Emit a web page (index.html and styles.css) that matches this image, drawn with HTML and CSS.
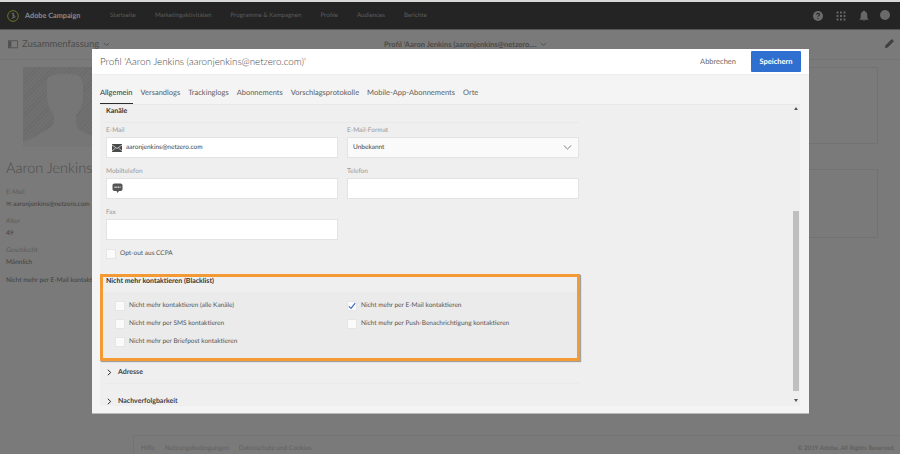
FILE: index.html
```html
<!DOCTYPE html>
<html lang="de">
<head>
<meta charset="utf-8">
<title>Adobe Campaign</title>
<link rel="stylesheet" href="styles.css">
</head>
<body>
<div class="page">
  <header class="topbar">
    <div class="brand">
      <svg class="logo" viewBox="0 0 18 18"><circle cx="9" cy="9" r="8" fill="none" stroke="#7d8a2e" stroke-width="1.200"/><path d="M7 5h3v1.500H9V11c0 1.200-1 2-2.200 1.800M9 8.500h1.500c1 0 1.500.6 1.500 1.500s-.6 1.600-1.600 1.600H9" fill="none" stroke="#8a8a8a" stroke-width="1"/></svg>
      <span class="brand-name">Adobe Campaign</span>
    </div>
    <nav class="nav">
      <span>Startseite</span><span>Marketingaktivitäten</span><span>Programme &amp; Kampagnen</span><span>Profile</span><span>Audiences</span><span>Berichte</span>
    </nav>
    <div class="top-icons">
      <svg class="ti" viewBox="0 0 14 14"><circle cx="7" cy="7" r="5" fill="#6a6a6a"/><path d="M5.600 5.600c0-1.700 2.900-1.700 2.900 0 0 1.100-1.500 1-1.500 2.200M7 9v1" fill="none" stroke="#262626" stroke-width="1.100"/></svg>
      <svg class="ti" viewBox="0 0 14 14" fill="#636363"><rect x="2.500" y="2.500" width="2" height="2"/><rect x="6" y="2.500" width="2" height="2"/><rect x="9.500" y="2.500" width="2" height="2"/><rect x="2.500" y="6" width="2" height="2"/><rect x="6" y="6" width="2" height="2"/><rect x="9.500" y="6" width="2" height="2"/><rect x="2.500" y="9.500" width="2" height="2"/><rect x="6" y="9.500" width="2" height="2"/><rect x="9.500" y="9.500" width="2" height="2"/></svg>
      <svg class="ti" viewBox="0 0 14 14" fill="#686868"><path d="M7 1.500c.6 0 1 .4 1 .9C9.700 3 10.300 4.300 10.300 6v3l1.500 1.800H2.200L3.700 9V6C3.700 4.300 4.300 3 6 2.400c0-.5.400-.9 1-.9zM5.800 11.500h2.400C8 12.500 6 12.500 5.800 11.500z"/></svg>
      <span class="avatar-dot"></span>
    </div>
  </header>

  <div class="subbar">
    <div class="sub-left">
      <svg class="panel-ic" viewBox="0 0 12 10"><rect x=".5" y=".5" width="11" height="8.500" fill="none" stroke="#4f4f4f"/><rect x="1" y="1" width="3" height="7.500" fill="#4f4f4f"/></svg>
      <span class="sub-title">Zusammenfassung</span>
      <svg class="chev" viewBox="0 0 8 5"><path d="M1 1l3 2.500L7 1" fill="none" stroke="#4f4f4f"/></svg>
    </div>
    <div class="sub-mid">
      <span>Profil 'Aaron Jenkins (aaronjenkins@netzero....</span>
      <svg class="chev" viewBox="0 0 8 5"><path d="M1 1l3 2.500L7 1" fill="none" stroke="#4f4f4f"/></svg>
    </div>
    <svg class="pencil" viewBox="0 0 12 12"><path d="M1 11l.7-3L8.500 1.200l2.300 2.300L4 10.300z" fill="#3f3f3f"/></svg>
  </div>

  <main class="bg-main">
    <aside class="side">
      <div class="photo">
        <svg viewBox="0 0 84 80" preserveAspectRatio="none"><path d="M0 75l8-3 17-10c5-3 6-7 6-10v-4c-4-5-7-11-7-18V15c0-4 2-6 4-6 3-1 7-2 12-2 6 0 11 0 14 1 4 2 6 6 6 10v12c0 7-3 13-7 18v8c0 4 3 7 7 9l24 10v5H0z" fill="#767676"/></svg>
      </div>
      <div class="person">Aaron Jenkins</div>
      <div class="lbl first">E-Mail</div>
      <div class="val">✉ aaronjenkins@netzero.com</div>
      <div class="lbl">Alter</div>
      <div class="val">49</div>
      <div class="lbl">Geschlecht</div>
      <div class="val">Männlich</div>
      <div class="val blk">Nicht mehr per E-Mail kontaktieren</div>
    </aside>
    <section class="right-boxes">
      <div class="bg-box"></div>
      <div class="bg-box second"></div>
    </section>
  </main>

  <footer class="foot">
    <div class="foot-links"><span>Hilfe</span><span>Nutzungsbedingungen</span><span>Datenschutz und Cookies</span></div>
    <span class="copy">© 2019 Adobe. All Rights Reserved.</span>
  </footer>

  <div class="modal">
    <div class="m-head">
      <h1 class="m-title">Profil 'Aaron Jenkins (aaronjenkins@netzero.com)'</h1>
      <div class="m-actions">
        <span class="cancel">Abbrechen</span>
        <span class="save">Speichern</span>
      </div>
    </div>
    <div class="tabs">
      <span class="tab active">Allgemein</span><span class="tab">Versandlogs</span><span class="tab">Trackinglogs</span><span class="tab">Abonnements</span><span class="tab">Vorschlagsprotokolle</span><span class="tab">Mobile-App-Abonnements</span><span class="tab">Orte</span>
    </div>
    <div class="scroll">
      <div class="form">
        <div class="sec-title">Kanäle</div>
        <div class="grid">
          <div class="field"><label>E-Mail</label>
            <div class="input">
              <svg class="mail-ic" viewBox="0 0 10 8"><rect width="10" height="8" fill="#4a4a4a"/><path d="M0 1l5 3.500L10 1M0 7l3.500-3M10 7L6.500 4" fill="none" stroke="#eee" stroke-width=".7"/></svg>
              <span>aaronjenkins@netzero.com</span>
            </div>
          </div>
          <div class="field"><label>E-Mail-Format</label>
            <div class="input select"><span>Unbekannt</span>
              <svg class="sel-ch" viewBox="0 0 10 6"><path d="M.5 .5L5 4.800 9.500 .5" fill="none" stroke="#666"/></svg>
            </div>
          </div>
          <div class="field"><label>Mobiltelefon</label>
            <div class="input">
              <svg class="sms-ic" viewBox="0 0 11 11"><path d="M2.500 .5h6c1.300 0 2 .7 2 2v3.500c0 1.300-.7 2-2 2H7L5.500 10 4.500 8h-2c-1.300 0-2-.7-2-2V2.500c0-1.300.7-2 2-2z" fill="#555"/><path d="M2.500 4.300h6" stroke="#ddd" stroke-width="1.400" stroke-dasharray="1.200 .6"/></svg>
            </div>
          </div>
          <div class="field"><label>Telefon</label><div class="input"></div></div>
          <div class="field"><label>Fax</label><div class="input"></div></div>
        </div>
        <div class="check-row opt"><span class="cb"></span><span>Opt-out aus CCPA</span></div>
      </div>

      <div class="highlight">
        <div class="hl-title">Nicht mehr kontaktieren (Blacklist)</div>
        <div class="hl-body">
          <div class="check-row"><span class="cb"></span><span>Nicht mehr kontaktieren (alle Kanäle)</span></div>
          <div class="check-row"><span class="cb">
            <svg class="tick" viewBox="0 0 10 9"><path d="M1 5l2.800 2.500L9 1" fill="none" stroke="#3a6fc9" stroke-width="1.500"/></svg>
          </span><span>Nicht mehr per E-Mail kontaktieren</span></div>
          <div class="check-row"><span class="cb"></span><span>Nicht mehr per SMS kontaktieren</span></div>
          <div class="check-row"><span class="cb"></span><span>Nicht mehr per Push-Benachrichtigung kontaktieren</span></div>
          <div class="check-row"><span class="cb"></span><span>Nicht mehr per Briefpost kontaktieren</span></div>
        </div>
      </div>

      <div class="acc first-acc"><svg class="acc-ch" viewBox="0 0 6 8"><path d="M1 .8L4.500 4 1 7.200" fill="none" stroke="#333" stroke-width="1.200"/></svg><span>Adresse</span></div>
      <div class="acc last-acc"><svg class="acc-ch" viewBox="0 0 6 8"><path d="M1 .8L4.500 4 1 7.200" fill="none" stroke="#333" stroke-width="1.200"/></svg><span>Nachverfolgbarkeit</span></div>

      <div class="scrollbar">
        <span class="arrow up"></span>
        <span class="thumb"></span>
        <span class="arrow down"></span>
      </div>
    </div>
  </div>
</div>
</body>
</html>
```

FILE: styles.css
```css
* { box-sizing: border-box; }
html, body { margin: 0; padding: 0; }
body { font-family: "Lato", "Open Sans", sans-serif; background: #7a7a7a; text-rendering: geometricPrecision; }
.page { position: relative; width: 900px; height: 454px; overflow: hidden; background: #7a7a7a; border-top: 2px solid #d8d8d8; display: flex; flex-direction: column; }

.topbar { height: 28px; flex: none; background: #242424; display: flex; align-items: center; padding: 0 10px 0 7px; border-bottom: 1px solid #555; }
.brand { display: flex; align-items: center; gap: 6px; width: 103px; }
.logo { width: 12px; height: 12px; }
.brand-name { font-size: 7.300px; font-weight: 700; color: #8b8b8b; white-space: nowrap; }
.nav { display: flex; gap: 19px; font-size: 6.200px; color: #5d5d5d; white-space: nowrap; }
.top-icons { margin-left: auto; display: flex; align-items: center; gap: 9px; }
.ti { width: 14px; height: 14px; }
.avatar-dot { width: 10px; height: 10px; border-radius: 50%; background: #6a6a6a; margin-left: 0; margin-top: -2px; }

.subbar { height: 30px; flex: none; display: flex; align-items: center; padding: 0 5px 0 8px; border-bottom: 1px solid #737373; color: #4a4a4a; }
.sub-left { display: flex; align-items: center; gap: 4px; width: 376px; }
.panel-ic { width: 10px; height: 9px; }
.sub-title { font-size: 9.500px; color: #4c4c4c; }
.chev { width: 7px; height: 5px; }
.sub-mid { display: flex; align-items: center; gap: 4px; font-size: 7.500px; font-weight: 700; }
.pencil { width: 11px; height: 11px; margin-left: auto; margin-top: -2px; }

.bg-main { flex: 1; display: flex; justify-content: space-between; min-height: 0; padding: 7px 22px 0 23px; }
.side { width: 84px; color: #444; }
.photo { width: 84px; height: 80px; background: repeating-linear-gradient(135deg, #6b6b6b 0 1px, #707070 1px 3px); }
.photo svg { display: block; width: 100%; height: 100%; }
.person { font-size: 14.500px; font-weight: 300; margin: 12px 0 0 -17px; color: #4d4d4d; white-space: nowrap; line-height: 20px; }
.side .lbl { font-size: 6.500px; color: #5a5a5a; margin: 8.500px 0 2.500px -17px; line-height: 9px; white-space: nowrap; }
.side .lbl.first { margin-top: 9px; }
.side .val { font-size: 6.500px; color: #3f3f3f; margin-left: -17px; line-height: 9px; white-space: nowrap; }
.side .blk { margin-top: 9px; }
.right-boxes { width: 69px; }
.bg-box { height: 77px; width: 69px; border: 1px solid #727272; border-left: 0; }
.bg-box.second { height: 69px; margin-top: 25px; }

.foot { height: 19px; flex: none; margin-left: 133px; padding: 0 5px 2px 7px; display: flex; align-items: flex-end; justify-content: space-between; font-size: 6.500px; color: #616161; border-left: 1px solid #737373; border-top: 1px solid #737373; }
.foot-links { display: flex; gap: 10px; }
.copy { font-weight: 700; font-size: 6.200px; color: #606060; }

.modal { position: absolute; left: 92px; top: 47px; width: 717px; height: 365px; background: #f4f4f4; border-bottom: 1px solid #b9b9b9; display: flex; flex-direction: column; }
.m-head { height: 26px; flex: none; background: #fff; display: flex; align-items: center; justify-content: space-between; padding: 0 8px; border-bottom: 1px solid #eee; }
.m-title { margin: 0; font-size: 9.800px; font-weight: 300; color: #444; white-space: nowrap; }
.m-actions { display: flex; align-items: center; gap: 15px; }
.cancel { font-size: 7.500px; color: #666; }
.save { width: 50px; height: 21px; background: #2f6fd0; color: #fff; font-size: 7.500px; font-weight: 700; display: flex; align-items: center; justify-content: center; border-radius: 1px; }

.tabs { height: 29px; flex: none; display: flex; align-items: flex-end; gap: 8px; padding: 0 8px; font-size: 7.500px; color: #5c5c5c; }
.tab { height: 19px; line-height: 12px; padding-top: 2px; white-space: nowrap; }
.tab.active { color: #2f2f2f; border-bottom: 1px solid #2c2c2c; }

.scroll { position: relative; margin: 0 9px 7px 8px; flex: 1; min-height: 0; background: #efefef; border-top: 1px solid #e8e8e8; overflow: hidden; padding: 2px 0 0 6px; }
.form { width: 473px; }
.sec-title { font-size: 7px; font-weight: 700; color: #333; line-height: 9px; height: 16px; border-bottom: 1px solid #e9e9e9; margin-bottom: 4px; }
.grid { display: grid; grid-template-columns: 232px 232px; column-gap: 9px; row-gap: 10px; }
.field label { display: block; font-size: 6.500px; color: #989898; line-height: 8px; margin-bottom: 2px; }
.input { height: 21px; background: #fff; border: 1px solid #e3e3e3; display: flex; align-items: center; padding: 0 5px; font-size: 6.500px; color: #444; }
.input.select { background: #fafafa; justify-content: space-between; }
.mail-ic { width: 10px; height: 8px; margin-right: 4px; }
.sms-ic { width: 11px; height: 11px; margin-top: -1px; }
.sel-ch { width: 9px; height: 5px; margin-right: 1px; }
.check-row { display: flex; align-items: flex-start; gap: 4px; font-size: 6.500px; color: #555; line-height: 9px; }
.cb { width: 10px; height: 10px; flex: none; background: #fafafa; border: 1px solid #e6e6e6; display: flex; align-items: center; justify-content: center; }
.tick { width: 9px; height: 8px; }
.opt { margin-top: 9px; }

.highlight { position: relative; width: 480px; height: 87px; margin-top: 15px; margin-left: -6px; border: 3px solid #f39a34; box-shadow: 1px 1px 1px #a0a0a0; background: #efefef; }
.hl-title { font-size: 7px; font-weight: 700; color: #333; height: 15px; line-height: 9px; padding: 0 2px 0 3px; }
.hl-body { background: #ebebeb; height: 66px; padding: 9px 12px 0; display: grid; grid-template-columns: 232px 1fr; grid-auto-rows: 18px; }

.acc { display: flex; align-items: center; gap: 6px; width: 473px; font-size: 7px; font-weight: 700; color: #444; padding-left: 1px; }
.first-acc { height: 23px; border-bottom: 1px solid #eaeaea; }
.last-acc { height: 22px; margin-top: 6px; }
.acc-ch { width: 5px; height: 7px; }

.scrollbar { position: absolute; right: 1px; top: 0; bottom: 0; width: 6px; }
.thumb { position: absolute; left: 0; top: 106px; height: 180px; width: 6px; background: #bfbfbf; }
.arrow { position: absolute; left: 1px; width: 0; height: 0; border-left: 2px solid transparent; border-right: 2px solid transparent; }
.arrow.up { top: 2px; border-bottom: 3px solid #555; }
.arrow.down { bottom: 4px; border-top: 3px solid #555; }
```
